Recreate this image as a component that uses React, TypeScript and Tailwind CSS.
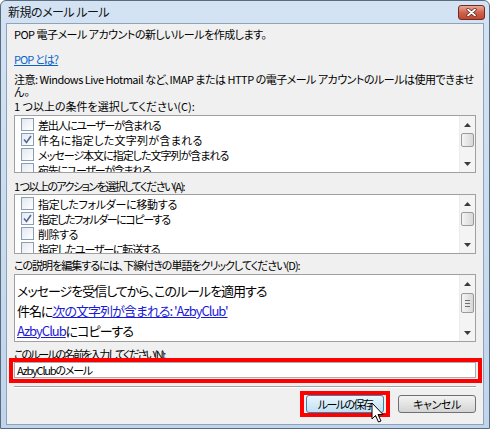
import React from "react";

const ui = "font-['Noto_Sans_CJK_JP',sans-serif] [font-feature-settings:'palt']";

function Arrow({ up }: { up?: boolean }) {
  return (
    <svg width="7" height="4" viewBox="0 0 7 4">
      <path d={up ? "M0 4 L3.5 0 L7 4 Z" : "M0 0 L3.5 4 L7 0 Z"} fill="#3b3b3b" />
    </svg>
  );
}

function ScrollBar({ offset, thumb, grip }: { offset: number; thumb: number; grip?: boolean }) {
  return (
    <div className="flex w-[16px] flex-col border-l border-[#ececec] bg-[#f4f4f4]">
      <div className="flex h-[17px] items-center justify-center">
        <Arrow up />
      </div>
      <div style={{ height: offset }} />
      <div
        className="mx-[1px] flex flex-col items-center justify-center gap-[2px] rounded-[2px] border border-[#9a9a9a] bg-gradient-to-r from-[#f4f4f4] to-[#d8d8d8]"
        style={{ height: thumb }}
      >
        {grip &&
          [0, 1, 2].map((i) => <div key={i} className="h-px w-[5px] bg-[#6f6f6f]" />)}
      </div>
      <div className="flex-1" />
      <div className="flex h-[17px] items-center justify-center">
        <Arrow />
      </div>
    </div>
  );
}

function Check({ checked }: { checked?: boolean }) {
  return (
    <div className="mr-[4px] flex h-[13px] w-[13px] shrink-0 items-center justify-center border border-[#8b9db5] bg-gradient-to-br from-[#e4e9ef] to-white">
      {checked && (
        <svg width="9" height="9" viewBox="0 0 9 9">
          <path d="M1 4.5 L3.5 7.5 L8 1" fill="none" stroke="#4e6a98" strokeWidth="1.6" />
        </svg>
      )}
    </div>
  );
}

type Item = { label: string; checked?: boolean; track: string };

function RuleList({ items }: { items: Item[] }) {
  return (
    <div className="flex h-full border border-[#a0a0a0] bg-white">
      <div className="flex-1 overflow-hidden pt-px pl-[6px]">
        {items.map((it) => (
          <div key={it.label} className="flex h-[15px] items-center text-[11px] text-black">
            <Check checked={it.checked} />
            <span className={`whitespace-nowrap ${it.track}`}>{it.label}</span>
          </div>
        ))}
      </div>
      <ScrollBar offset={0} thumb={14} />
    </div>
  );
}

function Cursor() {
  return (
    <svg width="14" height="22" viewBox="0 0 14 22" className="absolute left-[65px] top-[7px]">
      <path
        d="M1 1 L1 17 L4.5 13.5 L7.5 20 L10 19 L7 12.5 L12 12.5 Z"
        fill="#fff"
        stroke="#000"
        strokeWidth="1"
        strokeLinejoin="round"
      />
    </svg>
  );
}

export default function App() {
  const conditions: Item[] = [
    { label: "差出人にユーザーが含まれる", track: "tracking-[-1.3px]" },
    { label: "件名に指定した文字列が含まれる", checked: true, track: "tracking-[0.3px]" },
    { label: "メッセージ本文に指定した文字列が含まれる", track: "tracking-[-1px]" },
    { label: "宛先にユーザーが含まれる", track: "tracking-[-1.3px]" },
  ];
  const actions: Item[] = [
    { label: "指定したフォルダーに移動する", track: "tracking-[-0.3px]" },
    { label: "指定したフォルダーにコピーする", checked: true, track: "tracking-[-1.4px]" },
    { label: "削除する", track: "tracking-[-0.5px]" },
    { label: "指定したユーザーに転送する", track: "tracking-[-1.2px]" },
  ];

  return (
    <div className={`h-[429px] w-[490px] bg-white ${ui}`}>
      <div className="flex h-full flex-col rounded-t-[6px] border border-[#5a6b7d] bg-gradient-to-b from-[#d3e3f4] to-[#c0d5eb]">
        {/* title bar */}
        <div className="flex h-[22px] items-center justify-between pl-[7px] pr-[4px]">
          <span className="text-[12px] tracking-[-0.5px] text-[#111]">新規のメール ルール</span>
          <div className="flex h-[15px] w-[27px] items-center justify-center rounded-[3px] border border-[#6e2c22] bg-gradient-to-b from-[#e9a99a] via-[#d0634d] to-[#c2462f]">
            <svg width="11" height="9" viewBox="0 0 11 9">
              <path d="M2 1.5 L9 7.5 M9 1.5 L2 7.5" stroke="#5a1e16" strokeWidth="3.2" strokeLinecap="round" />
              <path d="M2 1.5 L9 7.5 M9 1.5 L2 7.5" stroke="#fff" strokeWidth="1.8" strokeLinecap="round" />
            </svg>
          </div>
        </div>

        {/* client area */}
        <div className="mx-[5px] mb-[3px] flex flex-1 flex-col border border-[#8ea3ba] bg-[#f0f0f0] px-[7px] text-[11px] leading-[14px] text-black">
          <div className="mt-[3px] tracking-[-0.5px]">POP 電子メール アカウントの新しいルールを作成します。</div>
          <div className="mt-[11px]">
            <span className="tracking-[-0.9px] text-[#0a64c8] underline">POP とは?</span>
          </div>
          <div className="mt-[7px] whitespace-nowrap leading-[12px] tracking-[-0.5px]">
            注意: Windows Live Hotmail など、IMAP または HTTP の電子メール アカウントのルールは使用できませ
          </div>
          <div className="h-[12px] overflow-hidden leading-[12px]">ん。</div>
          <div className="mt-[2px]">1 つ以上の条件を選択してください(C):</div>
          <div className="mt-[2px] h-[58px]">
            <RuleList items={conditions} />
          </div>
          <div className="mt-[6px] tracking-[-1.5px]">1 つ以上のアクションを選択してください(A):</div>
          <div className="mt-px h-[60px]">
            <RuleList items={actions} />
          </div>
          <div className="mt-[4px] tracking-[-1px]">この説明を編集するには、下線付きの単語をクリックしてください(D):</div>

          {/* rule description */}
          <div className="mt-[2px] flex h-[68px] border border-[#a0a0a0] bg-white">
            <div className="flex-1 pt-[6px] pl-[2px] text-[13px] leading-[20px] tracking-[-1px]">
              <div>メッセージを受信してから、このルールを適用する</div>
              <div>
                件名に<span className="text-[#1b1bd6] underline">次の文字列が含まれる: 'AzbyClub'</span>
              </div>
              <div>
                <span className="text-[#1b1bd6] underline">AzbyClub</span>にコピーする
              </div>
            </div>
            <ScrollBar offset={1} thumb={20} grip />
          </div>

          <div className="mt-[5px] tracking-[-2px]">このルールの名前を入力してください(N):</div>
          <div className="relative mt-px">
            <div className="flex h-[16px] items-center border border-[#abadb3] bg-white pl-[2px] text-[11px] tracking-[-1.2px]">
              AzbyClubのメール
            </div>
            <div className="absolute -left-[5px] -right-[6px] -top-[4px] -bottom-[5px] border-[4px] border-[#ff0000]" />
          </div>

          <div className="mt-[8px] h-[2px] border-t border-b border-t-[#a0a0a0] border-b-white" />

          <div className="mt-[7px] flex justify-end gap-[14px]">
            <div className="relative">
              <button className="flex h-[18px] w-[78px] items-center justify-center rounded-[3px] border border-[#3c7fb1] bg-gradient-to-b from-[#eaf6fd] to-[#bfe1f5] text-[11px] tracking-[-1.6px] text-black">
                ルールの保存
              </button>
              <div className="absolute -left-[6px] -right-[6px] -top-[4px] -bottom-[4px] border-[4px] border-[#ff0000]" />
              <Cursor />
            </div>
            <button className="flex h-[18px] w-[78px] items-center justify-center rounded-[3px] border border-[#707070] bg-gradient-to-b from-[#f3f3f3] to-[#d4d4d4] text-[11px] tracking-[-0.4px] text-black">
              キャンセル
            </button>
          </div>
        </div>
      </div>
    </div>
  );
}
